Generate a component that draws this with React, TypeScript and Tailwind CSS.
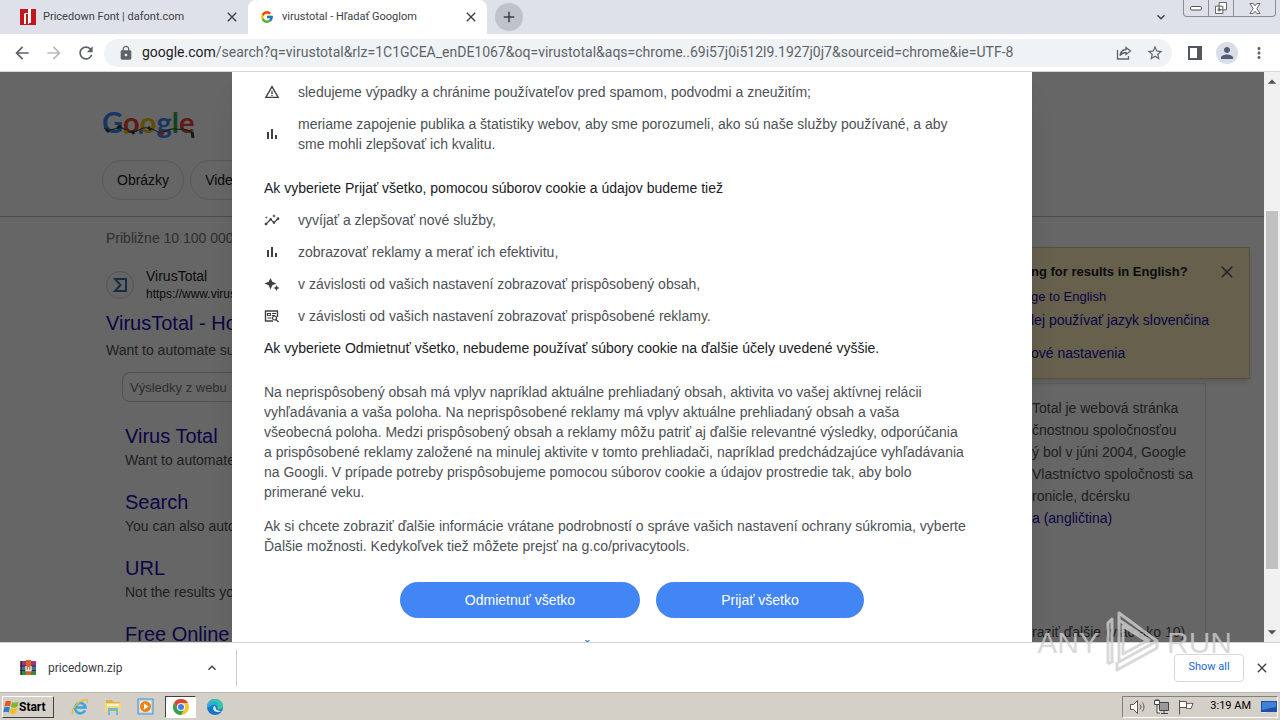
import type { ReactNode } from 'react';
import { FcGoogle } from 'react-icons/fc';
import {
  MdAdd,
  MdArrowBack,
  MdArrowDropDown,
  MdArrowDropUp,
  MdArrowForward,
  MdClose,
  MdExpandLess,
  MdExpandMore,
  MdInsights,
  MdLock,
  MdMoreVert,
  MdPerson,
  MdRefresh,
  MdStarBorder,
  MdWarningAmber,
} from 'react-icons/md';

const subResults = [
  { title: 'Virus Total', text: 'Want to automate' },
  { title: 'Search', text: 'You can also auto' },
  { title: 'URL', text: 'Not the results yo' },
  { title: 'Free Online', text: '' },
];

function AdsIcon() {
  return (
    <svg viewBox="0 0 16 16" className="h-4 w-4" fill="none" stroke="currentColor">
      <path d="M9 13H1.5V3h12v6" strokeWidth="1.4" />
      <path d="M3.5 5.5h3v2h-3zM8 5.5h4M8 7.5h3M3.5 10h4" strokeWidth="1.1" />
      <circle cx="10.5" cy="10" r="2" strokeWidth="1.2" />
      <path d="m12 11.5 2.5 2.5" strokeWidth="1.4" />
    </svg>
  );
}

function BarsIcon() {
  return (
    <svg viewBox="0 0 16 16" className="h-4 w-4" fill="currentColor">
      <path d="M3 6h2v7H3zM7 3h2v10H7zM11 9h2v4h-2z" />
    </svg>
  );
}

function SparkleIcon() {
  return (
    <svg viewBox="0 0 16 16" className="h-4 w-4" fill="currentColor">
      <path d="M6.500 2 8.300 5.700 12.500 7.500 8.300 9.300 6.500 13.500 4.700 9.300 .500 7.500 4.700 5.700z" />
      <path d="m12.500 9 .9 2.100 2.100.9-2.100.9-.9 2.100-.9-2.100-2.100-.9 2.100-.9z" />
    </svg>
  );
}

function DafontIcon() {
  return (
    <svg viewBox="0 0 16 16" className="h-4 w-4 shrink-0">
      <path fill="#c4161c" d="M0 0h16v16H0z" />
      <path fill="#fff" d="M8 0h3v14H9v1H8V5H6v10H4V5l1-1h3z" />
    </svg>
  );
}

function ShareIcon() {
  return (
    <svg viewBox="0 0 16 16" className="h-4 w-4" fill="none" stroke="#5f6368" strokeWidth="1.3">
      <path d="M1.5 5v9h11v-3" />
      <path d="M10 2.5 14.5 6 10 9.500V7.500C7 7.500 5.500 8.500 4 10.500 4.500 7 6.500 4.800 10 4.500z" />
    </svg>
  );
}

function ArchiveIcon() {
  return (
    <svg viewBox="0 0 16 16" className="h-4 w-4 shrink-0">
      <path fill="#9b3a78" d="M0 1h16v5H0z" />
      <path fill="#3f6fb5" d="M0 6h16v4H0z" />
      <path fill="#3d8a3c" d="M0 10h16v5H0z" />
      <path fill="#3b2a2a" d="M0 5.500h16v1H0zM0 10h16v1H0zM1 1h1v14H1z" />
      <path fill="#d8622a" d="M6 0h5v15H6z" />
      <path fill="none" stroke="#eee" strokeWidth="1.300" d="M6 6v4.500h5V6M8.500 7v3" />
    </svg>
  );
}

function WindowsFlag() {
  return (
    <svg viewBox="0 0 16 16" className="h-4 w-4 shrink-0">
      <path fill="#e5531f" d="M2.500 2.500c2-1 3.500-1 5.500 0L7 7.500c-2-1-3.500-1-5.500 0z" />
      <path fill="#7cb82f" d="M9 3c2 1 4 1 6.500-.500L14.500 7.500c-2.500 1.500-4.500 1.500-6.500.500z" />
      <path fill="#2f7bd0" d="M1.200 8.500c2-1 3.600-1 5.600 0l-1 5c-2-1-3.600-1-5.600 0z" />
      <path fill="#f6bd16" d="M7.800 9c2 1 4 1 6.500-.500l-1 5c-2.500 1.500-4.500 1.500-6.500.500z" />
    </svg>
  );
}

function ExplorerIcon() {
  return (
    <svg viewBox="0 0 18 18" className="h-[18px] w-[18px]" fill="none">
      <path d="M14 12.500a5.200 5.200 0 1 1 .5-3H5" stroke="#3aa6e0" strokeWidth="2.600" />
      <path d="M2 16C-1 13 6 4 13 2c4-1 4 1 3 3" stroke="#e9b930" strokeWidth="1.400" />
    </svg>
  );
}

function FolderIcon() {
  return (
    <svg viewBox="0 0 18 18" className="h-[18px] w-[18px]">
      <path fill="#d9b04a" d="M2 2h6l1 2h7v4H2z" />
      <path fill="#f3d87c" d="M1 5h16v9H1z" />
      <path fill="#fff5c4" d="M3 6h12v2H3z" />
      <path fill="#6fb9dc" d="M4 10h10v7h-2v-4H6v4H4z" />
    </svg>
  );
}

function MediaIcon() {
  return (
    <svg viewBox="0 0 18 18" className="h-[18px] w-[18px]">
      <path fill="#b9d9f0" stroke="#4b8fc4" d="M1 1h15v15H1z" />
      <path fill="#e6f2fa" d="M3 3h11v11H3z" />
      <circle cx="8.500" cy="8.500" r="5.500" fill="#f08418" />
      <path fill="#fff" d="M7 5.500v6l4.500-3z" />
    </svg>
  );
}

function ChromeIcon() {
  return (
    <svg viewBox="0 0 16 16" className="h-4 w-4">
      <circle cx="8" cy="8" r="8" fill="#f7c52b" />
      <path fill="#e04335" d="M1.070 4A8 8 0 0 1 14.930 4H8L4.500 10z" />
      <path fill="#32a350" d="M1.070 4A8 8 0 0 0 8 16l3.500-6L8 12 4.500 10z" />
      <circle cx="8" cy="8" r="4" fill="#fff" />
      <circle cx="8" cy="8" r="3" fill="#3f7fe8" />
    </svg>
  );
}

function EdgeIcon() {
  return (
    <svg viewBox="0 0 16 16" className="h-4 w-4">
      <circle cx="8" cy="8" r="8" fill="#1577c4" />
      <path fill="#38c7a5" d="M0 8C0 3 4 0 8 0s8 3 8 7c0 2-2 3.500-4 3.500-1.500 0-2-.500-1.500-1.500C11 6 8 4.500 5 5.500 2.500 6 .5 7 0 8z" />
      <path fill="#2ea9e0" d="M0 8c.5-3 3-5.500 7-5.500 3 0 5 2.500 3.800 6.500C10 6 8 5 5.500 6 3 7 2 9 0 8z" />
      <path fill="#d5eefa" d="M7 7c-2 3 0 6 4 6 1.500 0 2.500-.5 3.500-1-3 .5-6-1-6-3.500C8.500 7.500 8 7 7 7z" />
    </svg>
  );
}

function SoundIcon() {
  return (
    <svg viewBox="0 0 18 16" className="h-4 w-[18px]" fill="#fff" stroke="#555">
      <path d="M1.500 5.500h3l4-4v13l-4-4h-3z" />
      <path fill="none" d="M11 5.500c1.300 1.500 1.300 3.500 0 5M13.300 3.500c2.200 2.500 2.200 6.500 0 9" />
    </svg>
  );
}

function NetworkIcon() {
  return (
    <svg viewBox="0 0 18 16" className="h-4 w-[18px]" fill="#fff" stroke="#444">
      <path fill="#999" d="M6.500 3.500h9v8h-9z" />
      <path d="M8 14.500h7M11 12v2.500" />
      <path d="M1.500 1.500h5v4h-5zM3 0v2M5 0v2M4 5.500v8.500h3" />
    </svg>
  );
}

function FlagIcon() {
  return (
    <svg viewBox="0 0 18 16" className="h-4 w-[18px]" fill="#fff" stroke="#555">
      <path d="M2.500 1v14.500M2.500 2.500h7v6h-7zM9.500 4.500c2 1 3-1 6.500 0l-2 5c-1.500.5-3-.5-4.500 0z" />
    </svg>
  );
}

function DesktopIcon() {
  return (
    <svg viewBox="0 0 16 14" className="h-3.5 w-4">
      <path fill="#1c4fa8" d="M0 1h16v11H0z" />
      <path fill="#3f80d8" d="M1 2h14v5L1 10z" />
      <path fill="#d8e6f5" d="M0 12h5v1H0z" />
    </svg>
  );
}

function TabStrip() {
  return (
    <div className="flex h-[34px] items-stretch bg-[#dee1e9] text-[11px] text-[#3c4043]">
      <div className="flex w-[248px] items-center pl-5 pr-2">
        <DafontIcon />
        <span className="ml-[7px] flex-1 whitespace-nowrap">Pricedown Font | dafont.com</span>
        <button aria-label="Close Pricedown Font" className="text-base"><MdClose /></button>
      </div>
      <div className="flex w-[239px] items-center rounded-t-lg bg-white pl-3 pr-2">
        <FcGoogle className="h-3.5 w-3.5" />
        <span className="ml-2 flex-1 whitespace-nowrap">virustotal - Hľadať Googlom</span>
        <button aria-label="Close virustotal" className="text-base"><MdClose /></button>
      </div>
      <button aria-label="New tab" className="ml-2 flex h-7 w-7 items-center justify-center self-center rounded-full bg-[#bfc2c9] text-lg">
        <MdAdd />
      </button>
      <button aria-label="Search tabs" className="ml-auto mr-3.5 text-base"><MdExpandMore /></button>
      <div className="mr-1 flex h-[17px] rounded-b border border-t-0 border-[#8b8e96]">
        <button aria-label="Minimize" className="flex w-[25px] items-center justify-center border-r border-[#8b8e96]">
          <svg viewBox="0 0 12 6" className="h-1.5 w-3"><rect x=".5" y="1.500" width="11" height="3.500" rx="1" fill="#fff" stroke="#555" /></svg>
        </button>
        <button aria-label="Restore" className="flex w-[25px] items-center justify-center border-r border-[#8b8e96]">
          <svg viewBox="0 0 13 13" className="h-3 w-3" fill="#fff" stroke="#555">
            <path d="M4.500.5h8v8h-8zM.5 4.500h8v8h-8zM3.500 7.500h2v2h-2z" />
          </svg>
        </button>
        <button aria-label="Close window" className="flex w-[41px] items-center justify-center">
          <svg viewBox="0 0 12 12" className="h-[11px] w-3">
            <path d="M.5.500h3.500L6 3l2-2.500h3.500L8 6l3.500 5.500H8L6 9l-2 2.500H.5L4 6z" fill="#fff" stroke="#555" />
          </svg>
        </button>
      </div>
    </div>
  );
}

function Toolbar() {
  return (
    <div className="flex h-[38px] items-center border-b border-[#d5d7da] bg-white px-3 text-[#5f6368]">
      <button aria-label="Back" className="text-xl"><MdArrowBack /></button>
      <button aria-label="Forward" className="ml-3 text-xl text-[#b8babd]"><MdArrowForward /></button>
      <button aria-label="Reload" className="ml-3 text-xl"><MdRefresh /></button>
      <div className="ml-2 flex h-7 flex-1 items-center rounded-full bg-[#f0f3f6] pl-3.5 pr-2">
        <MdLock className="h-4 w-4" />
        <a href="#url" className="ml-2 flex-1 whitespace-nowrap text-[14px]">
          <span className="text-[#202124]">google.com</span>
          /search?q=virustotal&rlz=1C1GCEA_enDE1067&oq=virustotal&aqs=chrome..69i57j0i512l9.1927j0j7&sourceid=chrome&ie=UTF-8
        </a>
        <button aria-label="Share"><ShareIcon /></button>
        <button aria-label="Bookmark" className="ml-3.5 text-lg"><MdStarBorder /></button>
      </div>
      <button aria-label="Side panel" className="ml-4">
        <svg viewBox="0 0 14 14" className="h-3.5 w-3.5"><path d="M1 1h12v12H1z" fill="none" stroke="#54575b" strokeWidth="2" /><path d="M9 1h4v12H9z" fill="#54575b" /></svg>
      </button>
      <button aria-label="Profile" className="ml-3.5 rounded-full bg-[#dadde5] p-0.5 text-lg text-[#515a7c]"><MdPerson /></button>
      <button aria-label="Menu" className="ml-3 text-lg"><MdMoreVert /></button>
    </div>
  );
}

function Logo() {
  return (
    <div className="relative ml-[102px] flex h-8 w-24 items-center font-['Lato'] text-[29px] font-bold leading-8 text-[#4285f4]">
      <span>G</span>
      <span className="text-[#ea4335]">o</span>
      <span className="text-[#fbbc05]">o</span>
      <span>g</span>
      <span className="text-[#34a853]">l</span>
      <span className="text-[#ea4335]">e</span>
      {/* string of lights hanging over the letters */}
      <svg viewBox="0 0 96 34" className="absolute inset-x-0 top-0 h-[34px] w-24" fill="none">
        <path d="M2 22c8 6 14-4 20 1s12 3 17 0 12 0 17 3 9-4 17-3 14-1 18 5" stroke="#35503a" strokeWidth="1.200" />
        <path d="M4 23l3 3M15 22l4-2M30 25l2 3M46 21l3 3M90 26l1 6" stroke="#214a34" strokeWidth="3" />
        <circle cx="39" cy="26" r="2" fill="#4285f4" />
        <circle cx="60" cy="27" r="2" fill="#ea4335" />
        <circle cx="24" cy="26" r="2" fill="#fbbc05" />
      </svg>
    </div>
  );
}

function ResultsPage() {
  return (
    <div className="pt-[34px]">
      <Logo />
      <nav className="mt-[22px] flex gap-1.5 pl-[102px] text-sm text-[#202124]">
        <a href="#images" className="flex h-10 items-center rounded-full border border-[#dadce0] px-3.5">Obrázky</a>
        <a href="#videos" className="flex h-10 items-center rounded-full border border-[#dadce0] px-3.5">Videá</a>
      </nav>
      <div className="mt-4 border-t border-[#b8b8b8]" />
      <div className="flex justify-between">
        <main className="w-[300px] overflow-hidden whitespace-nowrap pl-[106px] pt-[11px] text-sm text-[#4d5156]">
          <p className="text-[#70757a]">Približne 10 100 000</p>
          <div className="mt-[19px] flex items-center gap-3">
            <span className="flex h-7 w-7 items-center justify-center rounded-full border border-[#d2d2d2]">
              <svg viewBox="0 0 14 14" className="h-3.5 w-3.5" fill="none" stroke="#3c6fae" strokeWidth="2">
                <path d="M13 1H2l5.500 6L2 13h11z" />
              </svg>
            </span>
            <div className="text-[#202124]">
              <div className="leading-[18px]">VirusTotal</div>
              <div className="text-xs leading-[18px]">https://www.virus</div>
            </div>
          </div>
          <h3 className="mt-1.5 text-xl leading-7"><a href="#virustotal" className="text-[#1a0dab]">VirusTotal - Ho</a></h3>
          <p className="mt-px leading-6">Want to automate su</p>
          <input
            aria-label="Výsledky z webu"
            placeholder="Výsledky z webu"
            className="ml-4 mt-2.5 h-[30px] w-60 rounded-lg border border-[#c4c7cb] px-[7px] text-[13px] placeholder:text-[#70757a]"
          />
          <ul className="ml-[19px] mt-5">
            {subResults.map((result) => (
              <li key={result.title} className="h-[66px]">
                <h3 className="text-xl leading-7"><a href="#result" className="text-[#1a0dab]">{result.title}</a></h3>
                <p>{result.text}</p>
              </li>
            ))}
          </ul>
        </main>
        <aside className="mr-3.5 w-[250px] whitespace-nowrap pt-[30px] text-sm">
          <div className="flex h-[132px] flex-col border border-[#dccb90] bg-[#fff0c0] pl-[30px] pr-3 pt-3 text-[#1a0dab] shadow-md">
            <div className="flex h-6 items-center justify-between text-[13px] text-[#202124]">
              <b>ng for results in English?</b>
              <button aria-label="Dismiss" className="text-xl text-[#5f6368]"><MdClose /></button>
            </div>
            <a href="#english" className="mt-px text-[13px] leading-6">ge to English</a>
            <a href="#slovak" className="leading-[22px]">lej používať jazyk slovenčina</a>
            <a href="#settings" className="mt-2.5 leading-6">ové nastavenia</a>
          </div>
          <div className="mr-11 mt-1 h-[280px] border border-[#dadce0] pl-[31px] pt-[13px] leading-[22px] text-[#4d5156]">
            <p>
              Total je webová stránka<br />
              čnostnou spoločnosťou<br />
              ý bol v júni 2004, Google<br />
              Vlastníctvo spoločnosti sa<br />
              ronicle, dcérsku
            </p>
            <a href="#wiki" className="text-[#1a0dab]">a (angličtina)</a>
            <p className="mt-[92px]">raziť ďalšie (viac ako 10)</p>
          </div>
        </aside>
      </div>
    </div>
  );
}

function ConsentItem({ icon, children }: { icon: ReactNode; children: ReactNode }) {
  return (
    <li className="flex items-center gap-[18px]">
      <span className="text-base text-[#3c4043]">{icon}</span>
      <span>{children}</span>
    </li>
  );
}

function ConsentDialog() {
  return (
    <div role="dialog" aria-label="Google" className="w-[800px] shrink-0 bg-white px-8 pt-2.5 text-[14px] leading-5 whitespace-nowrap text-[#4d5156] shadow-xl">
      <ul className="flex flex-col gap-3">
        <ConsentItem icon={<MdWarningAmber />}>
          sledujeme výpadky a chránime používateľov pred spamom, podvodmi a zneužitím;
        </ConsentItem>
        <ConsentItem icon={<BarsIcon />}>
          meriame zapojenie publika a štatistiky webov, aby sme porozumeli, ako sú naše služby používané, a aby
          <br />
          sme mohli zlepšovať ich kvalitu.
        </ConsentItem>
      </ul>
      <p className="mt-6 text-[#202124]">Ak vyberiete Prijať všetko, pomocou súborov cookie a údajov budeme tiež</p>
      <ul className="mt-3 flex flex-col gap-3">
        <ConsentItem icon={<MdInsights />}>vyvíjať a zlepšovať nové služby,</ConsentItem>
        <ConsentItem icon={<BarsIcon />}>zobrazovať reklamy a merať ich efektivitu,</ConsentItem>
        <ConsentItem icon={<SparkleIcon />}>v závislosti od vašich nastavení zobrazovať prispôsobený obsah,</ConsentItem>
        <ConsentItem icon={<AdsIcon />}>v závislosti od vašich nastavení zobrazovať prispôsobené reklamy.</ConsentItem>
      </ul>
      <p className="mt-3 text-[#202124]">Ak vyberiete Odmietnuť všetko, nebudeme používať súbory cookie na ďalšie účely uvedené vyššie.</p>
      <p className="mt-6">
        Na neprispôsobený obsah má vplyv napríklad aktuálne prehliadaný obsah, aktivita vo vašej aktívnej relácii<br />
        vyhľadávania a vaša poloha. Na neprispôsobené reklamy má vplyv aktuálne prehliadaný obsah a vaša<br />
        všeobecná poloha. Medzi prispôsobený obsah a reklamy môžu patriť aj ďalšie relevantné výsledky, odporúčania<br />
        a prispôsobené reklamy založené na minulej aktivite v tomto prehliadači, napríklad predchádzajúce vyhľadávania<br />
        na Googli. V prípade potreby prispôsobujeme pomocou súborov cookie a údajov prostredie tak, aby bolo<br />
        primerané veku.
      </p>
      <p className="mt-3.5">
        Ak si chcete zobraziť ďalšie informácie vrátane podrobností o správe vašich nastavení ochrany súkromia, vyberte<br />
        Ďalšie možnosti. Kedykoľvek tiež môžete prejsť na g.co/privacytools.
      </p>
      <div className="mt-[26px] flex justify-center gap-4 text-white">
        <button className="h-9 w-60 rounded-full bg-[#4285f4]">Odmietnuť všetko</button>
        <button className="h-9 w-52 rounded-full bg-[#4285f4]">Prijať všetko</button>
      </div>
      <div className="mt-5 text-center"><a href="#more" className="text-[#1a73e8]">Ďalšie možnosti</a></div>
    </div>
  );
}

function Scrollbar() {
  return (
    <div className="flex w-4 shrink-0 flex-col items-center justify-between bg-[#f1f1f1] text-xl text-[#505050]">
      <MdArrowDropUp />
      <div className="mt-auto mb-[53px] h-[358px] w-3 bg-[#c1c1c1]" />
      <MdArrowDropDown />
    </div>
  );
}

function Watermark() {
  return (
    <div className="absolute bottom-[46px] right-12 flex h-16 items-center gap-1.5 font-['Liberation_Sans',sans-serif] text-[30px] text-[#cfcfcf]/80">
      <span>ANY</span>
      <svg viewBox="0 0 56 64" className="h-16 w-14" fill="none" stroke="#cfcfcf" strokeOpacity=".8" strokeWidth="3" strokeLinejoin="round">
        <path d="M3 54V13l4-4v42M3 54l6-3" />
        <path d="M14 3v49l38-21zM14 3v7l31 21M12 52v8l40-22v-7M18 16v28l24-13z" />
      </svg>
      <span>RUN</span>
    </div>
  );
}

function DownloadBar() {
  return (
    <div className="flex h-[50px] items-center border-t border-[#d0d2d5] bg-white text-[#3c4043]">
      <div className="flex h-9 w-[237px] items-center border-r border-[#c8cacd] pl-5 pr-4">
        <ArchiveIcon />
        <span className="ml-3 flex-1 text-xs">pricedown.zip</span>
        <button aria-label="Download options" className="text-base"><MdExpandLess /></button>
      </div>
      <button className="ml-auto h-7 w-[70px] rounded border border-[#d5d7db] text-[11px] text-[#1967d2]">Show all</button>
      <button aria-label="Close downloads" className="mx-2.5 text-base"><MdClose /></button>
    </div>
  );
}

function Taskbar() {
  return (
    <div className="flex h-7 items-center border-t border-[#b9b6b0] bg-[#d4d0c8] px-0.5 text-[11px] text-black">
      <button className="flex h-[22px] w-[52px] items-center border border-b-[#404040] border-l-white border-r-[#404040] border-t-white text-xs font-bold">
        <WindowsFlag />
        Start
      </button>
      <div className="ml-[17px] flex items-center gap-[15px]">
        <button aria-label="Internet Explorer"><ExplorerIcon /></button>
        <button aria-label="Files"><FolderIcon /></button>
        <button aria-label="Media Player"><MediaIcon /></button>
      </div>
      <button aria-label="Chrome" className="ml-2.5 flex h-[22px] w-[31px] items-center justify-center border border-b-white border-l-[#404040] border-r-white border-t-[#404040] bg-white">
        <ChromeIcon />
      </button>
      <button aria-label="Edge" className="ml-[11px]"><EdgeIcon /></button>
      <div className="ml-auto flex h-[22px] w-[156px] items-center gap-1.5 border border-b-white border-l-[#808080] border-r-white border-t-[#808080] pl-1.5">
        <SoundIcon />
        <NetworkIcon />
        <FlagIcon />
        <span className="ml-auto mr-1 whitespace-nowrap">3:19 AM</span>
        <DesktopIcon />
      </div>
    </div>
  );
}

export default function App() {
  return (
    <div className="relative flex h-screen flex-col overflow-hidden bg-white font-['Roboto',sans-serif]">
      <TabStrip />
      <Toolbar />
      <div className="flex min-h-0 flex-1 font-['Liberation_Sans',sans-serif]">
        <div className="relative min-w-0 flex-1 overflow-hidden">
          <ResultsPage />
          <div className="absolute inset-0 flex items-start justify-center overflow-hidden bg-black/60">
            <ConsentDialog />
          </div>
        </div>
        <Scrollbar />
      </div>
      <DownloadBar />
      <Taskbar />
      <Watermark />
    </div>
  );
}
